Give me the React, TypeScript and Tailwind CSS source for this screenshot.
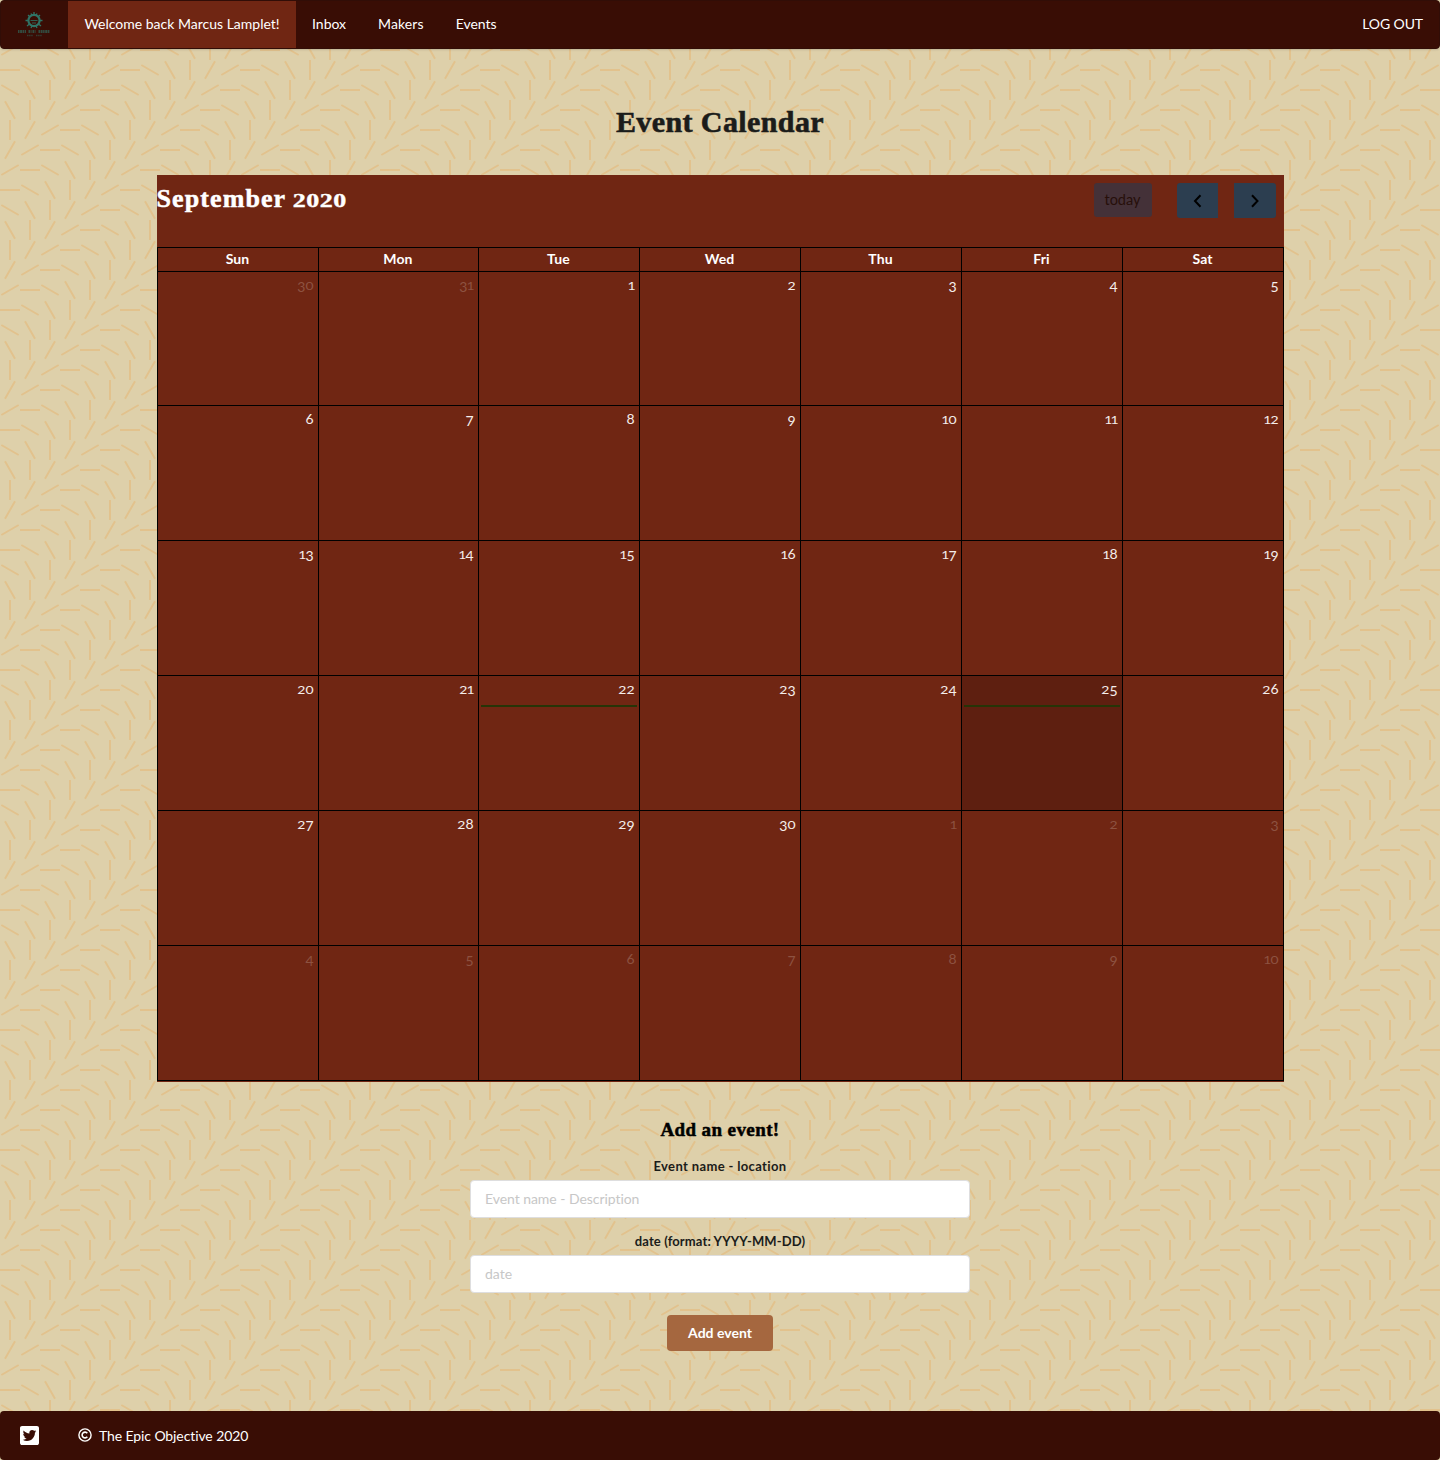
import React from 'react';

const DAYS = ['Sun', 'Mon', 'Tue', 'Wed', 'Thu', 'Fri', 'Sat'];

const CELLS = Array.from({ length: 42 }, (_, i) => {
  if (i < 2) return { n: 30 + i, muted: true };
  if (i < 32) return { n: i - 1, muted: false };
  return { n: i - 31, muted: true };
});

function figureClass(d: string) {
  if (d === '1') return 'inline-block origin-[50%_77%] scale-y-[0.76] -mx-[1px]';
  if (d === '0' || d === '2') return 'inline-block origin-[50%_77%] scale-y-[0.76]';
  if (d === '6' || d === '8') return 'inline-block';
  return 'inline-block translate-y-[2px]';
}

/* Old-style figures: 0-2 sit at x-height, 3 4 5 7 9 descend below the baseline. */
function Figures({ value }: { value: string }) {
  return (
    <>
      {value.split('').map((d, i) => (
        <span key={i} className={figureClass(d)}>{d}</span>
      ))}
    </>
  );
}

function Confetti() {
  const lines = [];
  for (let r = 0; r < 6; r++) {
    for (let c = 0; c < 6; c++) {
      const x = c * 20 + 10;
      const y = r * 20 + 10;
      lines.push(
        <line key={`${r}-${c}`} x1={x - 10} x2={x + 10} y1={y} y2={y} transform={`rotate(${((c + r + 3) % 6) * 30} ${x} ${y})`} />,
      );
    }
  }
  return (
    <svg className="absolute inset-0 -z-10 h-full w-full" aria-hidden="true">
      <defs>
        <pattern id="confetti" width="120" height="120" patternUnits="userSpaceOnUse">
          <g stroke="#e2c28d" strokeWidth="2">{lines}</g>
        </pattern>
      </defs>
      <rect width="100%" height="100%" fill="url(#confetti)" />
    </svg>
  );
}

function Logo() {
  return (
    <svg width="36" height="36" viewBox="0 0 36 36" fill="none" stroke="#2f7466">
      <circle cx="18" cy="14.500" r="5.600" strokeWidth="2.200" />
      <path d="M18 6v3M12 9l2 2M24 9l-2 2M9.500 14.500h3M26.500 14.500h-3M11 20l2.500-2M25 20l-2.500-2M15 7.500l1 2M21 7.500l-1 2M15 22l1-2M21 22l-1-2" strokeWidth="1.300" />
      <path d="M14.500 14.500h7M16 17h4" strokeWidth="0.800" />
      <path d="M2 25.500h8M12.500 25.500h3M16.500 25.500h3M22.500 25.500h11.500" strokeWidth="3" strokeDasharray="1.500 .6 2 .5" opacity="0.6" />
      <path d="M11 29.500h6M20 29.500h6" strokeWidth="1.400" strokeDasharray="1.500 .6" opacity="0.45" />
    </svg>
  );
}

export default function App() {
  return (
    <div className="relative isolate flex h-[1460px] w-[1440px] flex-col overflow-hidden bg-[#ded0aa] font-['Lato',sans-serif] text-[14px] text-white [font-variant-ligatures:none]">
      <Confetti />
      <nav className="flex h-[49px] shrink-0 items-stretch rounded border border-[#310d07] bg-[#390d05] leading-[14px] text-white shadow-[0_1px_2px_rgba(34,36,38,0.15)]">
        <a className="flex w-[67px] items-center justify-center pr-[2px] pb-[2px]"><Logo /></a>
        <a className="flex w-[228px] items-center justify-center bg-[#702613] pb-[2px] whitespace-nowrap">Welcome back Marcus Lamplet!</a>
        <a className="flex items-center px-4 pb-[2px]">Inbox</a>
        <a className="flex items-center px-4 pb-[2px] tracking-[0.1px]">Makers</a>
        <a className="flex items-center px-4 pb-[2px]">Events</a>
        <a className="ml-auto flex items-center px-4 pb-[2px] tracking-[-0.1px]">LOG OUT</a>
      </nav>

      <main className="flex flex-1 flex-col items-center">
        <h1 className="mt-[55px] whitespace-nowrap font-['Liberation_Serif',serif] text-[30px] leading-[36px] font-bold tracking-[0.4px] text-[#1b1c1a] [-webkit-text-stroke:0.6px]">Event Calendar</h1>

        <section className="mt-[35px] w-[1127px] bg-[#702613] pb-px">
          <header className="flex h-[72px] items-start justify-between pr-[8px]">
            <h2 className="mt-[10px] whitespace-nowrap font-['Liberation_Serif',serif] text-[26px] leading-[28px] font-bold [-webkit-text-stroke:0.5px]">
              <span className="tracking-[1.1px]">September</span>{' '}
              <span className="inline-block origin-[50%_80%] scale-y-[0.74] tracking-[0.500px]">2020</span>
            </h2>
            <div className="mt-[8px] flex">
              <button className="h-[34px] w-[58px] rounded-[3px] bg-[#443138] text-[14.5px] text-[#270f0a]">today</button>
              <button className="ml-[25px] flex h-[35px] w-[41px] items-center justify-center rounded-l-[3px] bg-[#2c3e50] pt-px">
                <svg width="10" height="14" viewBox="0 0 10 14" fill="none" stroke="black" strokeWidth="2"><path d="M8.500 1.200 3 7l5.500 5.800" /></svg>
              </button>
              <button className="ml-[16px] flex h-[35px] w-[42px] items-center justify-center rounded-r-[3px] bg-[#2c3e50] pt-px">
                <svg width="10" height="14" viewBox="0 0 10 14" fill="none" stroke="black" strokeWidth="2"><path d="M2 1.200 7.500 7 2 12.800" /></svg>
              </button>
            </div>
          </header>
          <div className="grid grid-cols-[161px_160px_repeat(5,161px)] grid-rows-[24px_134px_repeat(5,135px)] border-t border-l border-black">
            {DAYS.map((d) => (
              <div key={d} className="border-r border-b border-black text-center text-[14px] leading-[21px] font-bold tracking-[0.1px]">{d}</div>
            ))}
            {CELLS.map((c, i) => (
              <div key={i} className={`border-r border-b border-black ${i === 26 ? 'bg-[#5e1f10]' : ''}`}>
                <div className={`pt-[3px] pr-[4px] text-right leading-5 ${c.muted ? 'text-[#8d5241]' : 'text-[#f5eeeb]'}`}>
                  <Figures value={String(c.n)} />
                </div>
                {(i === 23 || i === 26) && <div className="mx-[2px] mt-[6px] h-[2px] bg-[#263407]" />}
              </div>
            ))}
          </div>
        </section>

        <form className="flex w-[500px] flex-col items-center text-[#1b1c1a]">
          <h3 className="mt-[37px] whitespace-nowrap font-['Liberation_Serif',serif] text-[19px] leading-[22px] font-bold tracking-[0.4px] text-black [-webkit-text-stroke:0.5px]">Add an event!</h3>
          <label className="mt-[16px] text-[13px] leading-[18px] font-bold tracking-[0.36px]">Event name - location</label>
          <input className="mt-[5px] h-[38px] w-full rounded border border-[#dededf] bg-white px-[14px] pb-[2px] text-[14px] tracking-[-0.05px] placeholder:text-[#c7c7c7]" placeholder="Event name - Description" />
          <label className="mt-[14px] text-[13px] leading-[18px] font-bold tracking-[0.12px]">date (format: YYYY-MM-DD)</label>
          <input className="mt-[5px] h-[38px] w-full rounded border border-[#dededf] bg-white px-[14px] pb-[2px] text-[14px] placeholder:text-[#c7c7c7]" placeholder="date" />
          <button className="mt-[22px] h-[36px] w-[106px] rounded bg-[#a5673f] pb-[2px] text-[14px] font-bold text-white">Add event</button>
        </form>
      </main>

      <footer className="flex h-[49px] shrink-0 items-center rounded bg-[#390d05] text-white">
        <svg className="ml-[20px]" width="19" height="19" viewBox="0 32 448 448" fill="currentColor">
          <path d="M400 32H48C21.500 32 0 53.500 0 80v352c0 26.500 21.500 48 48 48h352c26.500 0 48-21.500 48-48V80c0-26.500-21.500-48-48-48zm-48.900 158.800c.2 2.800.2 5.700.2 8.500 0 86.700-66 186.600-186.600 186.600-37.200 0-71.700-10.800-100.700-29.400 5.300.6 10.400.8 15.800.8 30.700 0 58.900-10.400 81.400-28-28.800-.6-53-19.500-61.300-45.500 10.100 1.500 19.200 1.500 29.600-1.200-30-6.100-52.500-32.500-52.500-64.400v-.8c8.700 4.900 18.900 7.900 29.600 8.300a65.447 65.447 0 0 1-29.200-54.600c0-12.200 3.200-23.400 8.900-33.100 32.300 39.800 80.800 65.800 135.200 68.600-9.300-44.500 24-80.600 64-80.600 18.900 0 35.900 7.900 47.900 20.700 14.800-2.800 29-8.300 41.600-15.800-4.900 15.200-15.200 28-28.800 36.100 13.200-1.400 26-5.100 37.800-10.200-8.900 13.100-20.100 24.700-32.900 34z" />
        </svg>
        <svg className="mb-[2px] ml-[39px]" width="14" height="14" viewBox="0 0 14 14" fill="none" stroke="white" strokeWidth="1.400">
          <circle cx="7" cy="7" r="6.100" />
          <path d="M9.300 8.800A2.900 2.900 0 1 1 9.300 5.200" strokeWidth="1.600" />
        </svg>
        <span className="ml-[7px] tracking-[-0.1px]">The Epic Objective 2020</span>
      </footer>
    </div>
  );
}
